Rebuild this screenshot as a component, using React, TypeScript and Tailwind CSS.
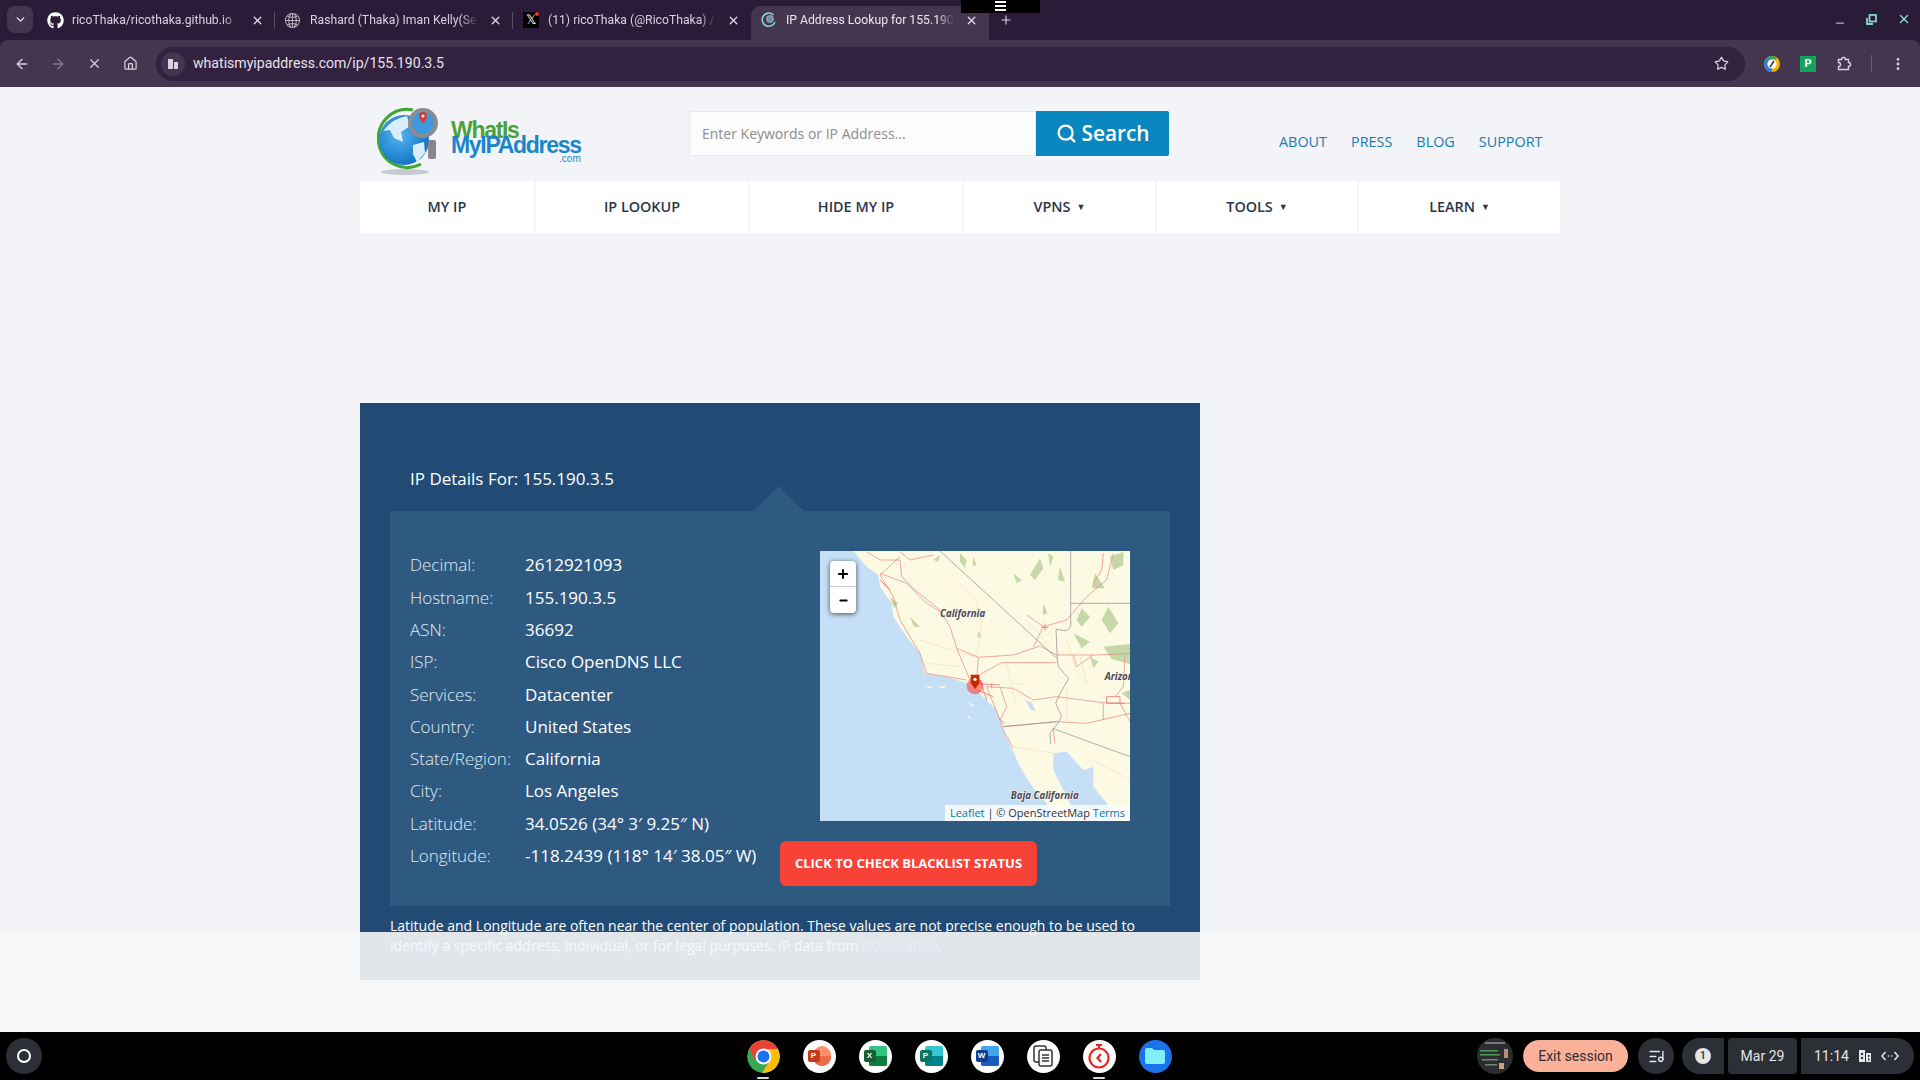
import { ArrowLeft, ArrowRight, X, Home, Star, MoreVertical, ChevronDown, Plus, Minus, Search, ListMusic } from "lucide-react";
import { FaGithub } from "react-icons/fa";
import { BsGlobe2 } from "react-icons/bs";

const navItems = [
  { label: "MY IP", w: "w-[176px]" },
  { label: "IP LOOKUP", w: "w-[214px]" },
  { label: "HIDE MY IP", w: "w-[214px]" },
  { label: "VPNS", w: "w-[193px]", caret: true },
  { label: "TOOLS", w: "w-[202px]", caret: true },
  { label: "LEARN", w: "w-[201px]", caret: true },
];

const rows = [
  ["Decimal:", "2612921093"],
  ["Hostname:", "155.190.3.5"],
  ["ASN:", "36692"],
  ["ISP:", "Cisco OpenDNS LLC"],
  ["Services:", "Datacenter"],
  ["Country:", "United States"],
  ["State/Region:", "California"],
  ["City:", "Los Angeles"],
  ["Latitude:", "34.0526 (34° 3′ 9.25″ N)"],
  ["Longitude:", "-118.2439 (118° 14′ 38.05″ W)"],
];

function Favicon({ kind }: { kind: string }) {
  if (kind === "github") return <FaGithub size={17} className="text-white" />;
  if (kind === "globe") return <BsGlobe2 size={15} className="text-[#bdb5c4]" />;
  if (kind === "x")
    return (
      <span className="relative flex h-4 w-4 items-center justify-center bg-black text-[13px] font-['Liberation_Sans',sans-serif] text-white">
        𝕏<span className="absolute right-0 top-0 h-1 w-1 rounded-full bg-red-500" />
      </span>
    );
  return (
    <svg width="16" height="16" viewBox="0 0 16 16" fill="none">
      <path d="M12.5 3 A6.6 6.6 0 1 0 14 10" stroke="#7fd8c5" strokeWidth="1.6" />
      <circle cx="9" cy="7" r="3.4" fill="#6b8ba6" stroke="#a9b0b8" />
    </svg>
  );
}

function Tab({ icon, title, active }: { icon: string; title: string; active?: boolean }) {
  return (
    <div className={`relative flex h-[34px] w-[238px] shrink-0 items-center pb-[6px] pl-[10px] pr-[11px] ${active ? "rounded-t-[10px] bg-[#44364f] text-[#ece6f0]" : "text-[#d8d0de]"}`}>
      <span className="flex w-[25px] shrink-0 items-center"><Favicon kind={icon} /></span>
      <span className="w-[168px] overflow-hidden whitespace-nowrap text-[12.2px] leading-[16px] [mask-image:linear-gradient(to_right,black_90%,transparent)]">{title}</span>
      <X size={13} strokeWidth={2.4} className="ml-auto text-[#e5dfe9]" />
      {!active && icon !== "x" && <span className="absolute right-0 top-[6px] h-[17px] w-px bg-[#5b4e66]" />}
    </div>
  );
}

function MapPane() {
  return (
    <div className="relative h-[270px] w-[310px] overflow-hidden bg-[#fcfae2]">
      <svg viewBox="60 33 930 810" className="h-full w-full" fill="none">
        <path d="M160 33 L200 80 L235 105 L240 140 L275 190 L280 230 L320 290 L360 340 L375 400 L440 410 L500 430 L540 462 L590 510 L610 570 L635 625 L660 680 L700 745 L740 790 L760 843 L60 843 L60 33Z" fill="#c5dff6" />
        <path d="M760 640 L800 635 L850 690 L880 680 L880 740 L920 790 L945 843 L835 843 L790 750 L760 690Z" fill="#c5dff6" />
        <path d="M675 480 l20 8 l12 26 l-14 -4Z" fill="#c5dff6" />
        <path d="M375 437 l25 3 l-8 6Z M410 440 l28 -3 l-6 8Z M502 486 l20 10 l-8 3Z M500 522 l16 16 l-8 -2Z" fill="#fcfae2" />
        <g fill="#c6d8a8">
          <path d="M480 40 l20 20 l-5 25 l-15 -20Z M520 50 l10 25 l-12 5Z M640 100 l25 20 l-15 10Z M690 105 l30 -50 l10 30 l-25 35Z M780 80 l15 45 l-22 -5Z M745 40 l15 10 l-10 30Z" />
          <path d="M845 205 l25 25 l-25 30 l-15 -20Z M925 200 l30 50 l-25 30 l-25 -40Z M885 100 l30 45 l-40 0Z M930 50 l40 -15 l0 40 l-30 15Z" />
          <path d="M820 280 l50 25 l-25 20Z M910 320 l80 -8 l0 60 l-55 -15Z M870 350 l25 15 l-15 20Z M730 190 l12 30 l-14 5Z M535 270 l8 20 l-10 2Z" />
          <path d="M965 460 l25 -10 l0 30Z M400 60 l20 -15 l-5 20Z M270 170 l25 20 l-12 15Z M330 230 l30 30 l-18 0Z" />
        </g>
        <g stroke="#f8d3b4" strokeWidth="1.6">
          <path d="M360 300 L520 350 M640 430 L675 432 M680 240 L760 330 M800 300 L830 400 L900 470 M800 440 L800 540 M380 370 L480 380 M470 120 L530 180 L545 260 L530 350 M640 620 L760 640 M880 660 L990 720 M840 350 L860 430 M620 370 L650 500" />
        </g>
        <g stroke="#f0817c" strokeWidth="2.1" strokeLinejoin="round">
          <path d="M200 35 L240 60 L300 60 L305 110 L345 150 L420 210 L450 260 L470 325 L510 420 M300 50 L240 105 L280 170 L300 240 L360 340 L380 400 L500 420" />
          <path d="M240 100 L320 130 L380 190 L430 220 M470 325 L535 352 L640 345 L720 318 L770 345 M510 420 L605 368 L770 368 M560 440 L640 445 L700 480 L770 470 L910 488 L990 490" />
          <path d="M600 440 L620 500 L600 540 L610 570 L640 625 M560 440 L600 540 M610 560 L770 545 L860 550 L990 520 M770 345 L890 345 L990 340 M535 352 L530 420" />
          <path d="M680 225 L730 260 L800 240 L860 170 L920 120 L940 40 M730 260 L700 320 M910 488 L910 540 M960 490 L990 545 M760 570 L765 610 M300 35 L330 60 L400 45 M820 345 L830 380 L880 345 M910 40 L905 90 L880 130 M975 345 L970 440 L945 470" />
        </g>
        <g stroke="#f0797b" strokeWidth="2.6">
          <path d="M515 430 L600 435 M530 450 L580 470 M540 420 L560 480 M240 120 L270 150 M920 470 L960 470 L960 490 L920 490 L920 470 M950 490 L975 490 M725 262 L745 262 M735 250 L735 272 M598 535 L612 550 M575 430 L575 445" />
        </g>
        <g stroke="#8c8591" strokeWidth="2">
          <path d="M420 33 L772 356 L775 380 L806 416 L780 460 L767 490 L785 530 L772 552 L750 580 L752 612 M757 565 L990 650 M610 560 L770 545 M812 33 L812 260 L800 272 L768 268 L772 356 M812 190 L990 190" />
        </g>
        <circle cx="525" cy="438" r="25" fill="#f33" opacity=".55" />
        <path d="M512 404 h26 v26 l-13 18 l-13 -18Z" fill="#c72a00" />
        <circle cx="525" cy="418" r="5" fill="#fff" />
        <g fontFamily="Open Sans, sans-serif" fontStyle="italic" fontWeight="700" fontSize="29" fill="#4d4763" stroke="#fcfae2" strokeWidth="3" paintOrder="stroke">
          <text x="420" y="230">California</text>
          <text x="914" y="420">Arizona</text>
          <text x="632" y="776">Baja California</text>
        </g>
      </svg>
      <div className="absolute left-[10px] top-[10px] flex w-[26px] flex-col overflow-hidden rounded-[4px] bg-white shadow-[0_1px_5px_rgba(0,0,0,0.65)]">
        <span className="flex h-[26px] items-center justify-center border-b border-[#ccc] text-black"><Plus size={14} strokeWidth={3.4} /></span>
        <span className="flex h-[26px] items-center justify-center text-black"><Minus size={11} strokeWidth={4} /></span>
      </div>
      <div className="absolute bottom-0 right-0 bg-white/80 px-[5px] text-[11px] leading-[16px] text-[#333]">
        <span className="text-[#0078a8]">Leaflet</span> | © OpenStreetMap <span className="text-[#0078a8]">Terms</span>
      </div>
    </div>
  );
}

function Logo() {
  return (
    <div className="flex items-start pl-[17px]">
      <svg width="64" height="68" viewBox="0 0 64 68" fill="none" className="shrink-0">
        <defs>
          <radialGradient id="globe" cx="0.4" cy="0.4" r="0.7">
            <stop offset="0" stopColor="#54b4ee" />
            <stop offset="1" stopColor="#0d6cc0" />
          </radialGradient>
        </defs>
        <ellipse cx="28" cy="65" rx="24" ry="3" fill="#c6c9cd" />
        <path d="M44 57 A29 29 0 1 1 36 3" stroke="#3fa535" strokeWidth="3" />
        <circle cx="27" cy="33" r="25" fill="url(#globe)" />
        <path d="M6 24 q10 -13 24 -15 l3 10 l-9 6 l2 10 l-9 -4 l-4 -8Z M36 38 l11 -3 l1 11 l-8 9 l-4 -8Z" fill="#d9eefa" />
        <circle cx="46" cy="16" r="13" fill="#3f97dc" stroke="#8a8d90" strokeWidth="4" />
        <rect x="51" y="33" width="8" height="19" rx="2" fill="#85888a" />
        <path d="M46 5 a4 4 0 0 1 4 4 q0 3 -4 7.5 q-4 -4.5 -4 -7.5 A4 4 0 0 1 46 5Z" fill="#d83a2e" />
        <circle cx="46" cy="9" r="1.5" fill="#fff" />
      </svg>
      <div className="ml-[10px] mt-[15px] flex flex-col font-['Liberation_Sans',sans-serif] font-bold tracking-[-1.3px]">
        <span className="text-[23px] leading-[16px] text-[#4aa33a]">WhatIs</span>
        <span className="text-[23px] leading-[15px] text-[#1a86c9]">MyIPAddress</span>
        <span className="mt-[1px] text-right text-[10px] font-normal leading-[10px] tracking-normal text-[#1a86c9]">.com</span>
      </div>
    </div>
  );
}

function DockIcon({ children, bg = "bg-white", dot }: { children: React.ReactNode; bg?: string; dot?: boolean }) {
  return (
    <div className="relative flex w-[56px] justify-center">
      <span className={`flex h-[33px] w-[33px] items-center justify-center overflow-hidden rounded-full ${bg}`}>{children}</span>
      {dot && <span className="absolute -bottom-[6px] h-[2px] w-[12px] rounded bg-[#d8dadd]" />}
    </div>
  );
}

function OfficeIcon({ letter, back, mid, front, round }: { letter: string; back: string; mid: string; front: string; round?: boolean }) {
  return (
    <span className="relative block h-[20px] w-[23px]">
      <span className={`absolute right-0 top-0 h-[20px] w-[18px] overflow-hidden ${round ? "rounded-full" : "rounded-[2px]"} ${back}`}>
        <span className={`absolute bottom-0 left-0 h-[10px] w-full ${mid}`} />
      </span>
      <span className={`absolute left-0 top-[4px] flex h-[12px] w-[12px] items-center justify-center rounded-[2px] text-[8px] font-bold text-white font-['Liberation_Sans',sans-serif] ${front}`}>{letter}</span>
    </span>
  );
}

export default function App() {
  return (
    <div className="relative flex h-screen w-full flex-col overflow-hidden bg-[#f2f4f7] font-['Open_Sans',sans-serif]">
      {/* browser chrome */}
      <div className="h-[87px] shrink-0 bg-[#2a1c39] font-['Roboto',sans-serif]">
        <div className="flex h-[40px] items-end pl-[7px]">
          <span className="mb-[7px] flex h-[27px] w-[26px] items-center justify-center rounded-lg bg-[#44364f] text-[#e5dfe9]"><ChevronDown size={13} strokeWidth={2.6} /></span>
          <div className="ml-[4px] flex">
            <Tab icon="github" title="ricoThaka/ricothaka.github.io" />
            <Tab icon="globe" title="Rashard (Thaka) Iman Kelly(Se" />
            <Tab icon="x" title="(11) ricoThaka (@RicoThaka) /" />
            <Tab icon="wimip" title="IP Address Lookup for 155.190" active />
          </div>
          <Plus size={14} strokeWidth={2} className="mb-[13px] ml-[10px] text-[#d8cfe0]" />
          <div className="mb-[14px] ml-auto flex items-center gap-[20px] pr-[9px] text-[#7fd8c5]">
            <Minus size={12} strokeWidth={2.5} className="translate-y-[4px]" />
            <svg width="11" height="11" viewBox="0 0 11 11" fill="none" stroke="#7fd8c5" strokeWidth="1.8">
              <rect x="3.5" y="1" width="6.5" height="6.5" />
              <path d="M1 4v6h6" />
            </svg>
            <X size={14} strokeWidth={2.5} />
          </div>
        </div>
        <div className="flex h-[47px] items-center rounded-t-[8px] bg-[#44364f] pl-[14px] pr-[12px] text-[#d8cfe0]">
          <ArrowLeft size={16} strokeWidth={2} />
          <ArrowRight size={16} strokeWidth={2} className="ml-[20px] text-[#85798f]" />
          <X size={15} strokeWidth={2} className="ml-[21px]" />
          <Home size={15} strokeWidth={2} className="ml-[21px]" />
          <div className="ml-[18px] flex h-[34px] w-[1589px] shrink-0 items-center rounded-full bg-[#32213f] pl-[5px] pr-[16px]">
            <span className="flex h-[24px] w-[24px] items-center justify-center rounded-full bg-[#44364f]">
              <svg width="12" height="12" viewBox="0 0 12 12" fill="#d8cfe0"><path d="M1 1h5v10H1Z" /><path d="M7 4h4v7H7Z" /></svg>
            </span>
            <span className="ml-[8px] text-[14.1px] text-[#e8e2ec]">whatismyipaddress.com/ip/155.190.3.5</span>
            <Star size={15} strokeWidth={2} className="ml-auto" />
          </div>
          <svg width="16" height="16" viewBox="0 0 16 16" className="ml-[19px] shrink-0">
            <circle cx="8" cy="8" r="8" fill="#f5b400" />
            <path d="M8 0 a8 8 0 0 0 -8 8 a8 8 0 0 0 8 8Z" fill="#2f7de1" />
            <path d="M3 2 a8 8 0 0 1 10 0 L8 5Z" fill="#34a853" />
            <circle cx="8" cy="8" r="4.6" fill="#fff" />
            <path d="M10 5 L6 11" stroke="#44364f" strokeWidth="1.6" />
          </svg>
          <span className="ml-[20px] flex h-[16px] w-[16px] shrink-0 items-center justify-center bg-[#12a45c] text-[11px] font-bold leading-none text-white">P</span>
          <svg width="16" height="16" viewBox="0 0 16 16" fill="none" stroke="#d8cfe0" strokeWidth="1.4" className="ml-[20px] shrink-0">
            <path d="M2.5 3.5h3a2 2 0 0 1 4 0h3v3a2 2 0 0 1 0 4v3h-10v-3a2 2 0 0 0 0-4Z" />
          </svg>
          <span className="ml-[19px] h-[17px] w-px shrink-0 bg-[#6a5d75]" />
          <MoreVertical size={16} strokeWidth={2.2} className="ml-[18px] shrink-0" />
        </div>
      </div>

      {/* page */}
      <div className="ml-[360px] w-[1200px]">
        <div className="flex h-[94px]">
          <div className="mt-[20px] w-[220px]"><Logo /></div>
          <div className="ml-[109px] mt-[24px] flex h-[45px]">
            <div className="flex w-[347px] items-center border border-[#e6e8ec] bg-[#fcfcfc] pl-[12px] text-[14px] text-[#8d8d8d]">Enter Keywords or IP Address...</div>
            <button className="flex w-[133px] items-center justify-center gap-[5px] rounded-r-[2px] bg-[#0a87bf] text-[20.8px] font-semibold text-white">
              <Search size={21} strokeWidth={2.6} />
              Search
            </button>
          </div>
          <div className="ml-[110px] mt-[45px] flex h-[20px] gap-[24px] text-[14.4px] leading-[20px] text-[#1b79b5]">
            <span>ABOUT</span>
            <span>PRESS</span>
            <span>BLOG</span>
            <span>SUPPORT</span>
          </div>
        </div>
        <div className="flex h-[52px] bg-white">
          {navItems.map((n) => (
            <div key={n.label} className={`flex items-center justify-center gap-[6px] border-r-2 border-[#f2f4f7] pb-[1px] text-[14.4px] font-semibold text-[#2b3648] last:border-r-0 ${n.w}`}>
              {n.label}
              {n.caret && <span className="text-[9px]">▼</span>}
            </div>
          ))}
        </div>

        <div className="mt-[170px] h-[577px] w-[840px] bg-[#214a75] text-white">
          <div className="relative h-[108px] pl-[50px] pt-[62px] text-[17px] leading-[28px]">
            IP Details For: 155.190.3.5
            <span className="absolute bottom-0 left-[394px] h-0 w-0 border-x-[25px] border-b-[25px] border-x-transparent border-b-[#2e5a82]" />
          </div>
          <div className="mx-[30px] flex h-[395px] bg-[#2e5a82]">
            <div className="w-[430px] pl-[20px] pt-[38px]">
              {rows.map(([label, value]) => (
                <div key={label} className="flex h-[32.3px] items-center whitespace-nowrap text-[17px]">
                  <span className="w-[115px] shrink-0 font-light text-[#e4ebf1]">{label}</span>
                  <span>{value}</span>
                </div>
              ))}
            </div>
            <div className="pt-[40px]">
              <MapPane />
              <button className="-ml-[40px] mt-[20px] flex h-[45px] w-[257px] items-center justify-center rounded-[6px] bg-[#f64237] text-[13px] font-bold text-white">CLICK TO CHECK BLACKLIST STATUS</button>
            </div>
          </div>
          <p className="mx-[30px] mt-[10px] text-[14px] leading-[20px]">
            Latitude and Longitude are often near the center of population. These values are not precise enough to be used to identify a specific address, individual, or for legal purposes. IP data from <span className="text-[#5aa6d6]">IP2Location</span>.
          </p>
        </div>
      </div>

      {/* fade over the bottom of the page */}
      <div className="absolute inset-x-0 bottom-[48px] top-[932px] bg-[#f6f7f8]/90" />

      {/* fullscreen handle */}
      <div className="absolute left-[961px] top-0 flex h-[13px] w-[79px] flex-col items-center gap-[2px] bg-black pt-[1px]">
        <span className="h-[2px] w-[11px] bg-white" />
        <span className="h-[2px] w-[11px] bg-white" />
        <span className="h-[2px] w-[11px] bg-white" />
      </div>

      {/* shelf */}
      <div className="absolute inset-x-0 bottom-0 flex h-[48px] items-center bg-black font-['Roboto',sans-serif]">
        <span className="ml-[6px] flex h-[36px] w-[36px] items-center justify-center rounded-full bg-[#2c2f36]">
          <span className="h-[14px] w-[14px] rounded-full border-2 border-white" />
        </span>
        <div className="ml-[693px] flex items-center">
          <DockIcon bg="bg-transparent" dot>
            <svg width="33" height="33" viewBox="0 0 33 33">
              <circle cx="16.5" cy="16.5" r="16.5" fill="#34a853" />
              <path d="M16.5 0 A16.5 16.5 0 0 1 31 9 L16.5 9 L7 20 L2.5 8 A16.5 16.5 0 0 1 16.5 0Z" fill="#ea4335" />
              <path d="M31 9 A16.5 16.5 0 0 1 15 33 L23 20 L16.5 9Z" fill="#fbbc04" />
              <circle cx="16.5" cy="16.5" r="8" fill="#fff" />
              <circle cx="16.5" cy="16.5" r="6" fill="#1a73e8" />
            </svg>
          </DockIcon>
          <DockIcon><OfficeIcon letter="P" back="bg-[#ff8f6b]" mid="bg-[#ed6c47]" front="bg-[#c43e1c]" round /></DockIcon>
          <DockIcon><OfficeIcon letter="X" back="bg-[#33c481]" mid="bg-[#107c41]" front="bg-[#185c37]" /></DockIcon>
          <DockIcon><OfficeIcon letter="P" back="bg-[#37c6d0]" mid="bg-[#038387]" front="bg-[#077568]" /></DockIcon>
          <DockIcon><OfficeIcon letter="W" back="bg-[#41a5ee]" mid="bg-[#185abd]" front="bg-[#103f91]" /></DockIcon>
          <DockIcon>
            <svg width="24" height="24" viewBox="0 0 24 24" fill="none" stroke="#333" strokeWidth="1.5">
              <rect x="3" y="2" width="12" height="16" rx="2" />
              <rect x="8" y="6" width="13" height="16" rx="2" fill="#fff" />
              <path d="M11 11h7M11 14h7M11 17h7" />
            </svg>
          </DockIcon>
          <DockIcon dot>
            <svg width="26" height="26" viewBox="0 0 26 26" fill="none" stroke="#e8281e" strokeWidth="2.2">
              <circle cx="13" cy="15" r="9.5" />
              <path d="M10 2h6M13 2v3M15 11l-3.5 4 3.5 4" />
            </svg>
          </DockIcon>
          <DockIcon bg="bg-[#1a73e8]">
            <svg width="22" height="18" viewBox="0 0 22 18"><path d="M1 3 a2 2 0 0 1 2 -2 h5 l2 2 h9 a2 2 0 0 1 2 2 v10 a2 2 0 0 1 -2 2 H3 a2 2 0 0 1 -2 -2Z" fill="#80f0f8" /></svg>
          </DockIcon>
        </div>
        <div className="ml-auto mr-[6px] flex items-center text-[#e3e5e8]">
          <svg width="36" height="36" viewBox="0 0 36 36" className="rounded-full">
            <rect width="36" height="36" fill="#2b2d30" />
            <rect x="8" y="4" width="20" height="2" fill="#777" />
            <rect x="3" y="12" width="18" height="1.5" fill="#4d9b55" />
            <rect x="3" y="16" width="20" height="1.5" fill="#4d9b55" />
            <rect x="5" y="21" width="16" height="1.5" fill="#6f876f" />
            <rect x="8" y="26" width="12" height="1.5" fill="#6f876f" />
            <rect x="27" y="11" width="4" height="9" fill="#b88f7a" />
            <rect x="22" y="25" width="5" height="6" fill="#c9a08c" />
          </svg>
          <span className="ml-[10px] flex h-[32px] w-[105px] items-center justify-center rounded-full bg-[#fbb09a] text-[14px] text-[#2c2f36]">Exit session</span>
          <span className="ml-[10px] flex h-[36px] w-[36px] items-center justify-center rounded-full bg-[#2c2f36]"><ListMusic size={17} /></span>
          <span className="ml-[8px] flex h-[36px] w-[42px] items-center justify-center rounded-l-full rounded-r-[4px] bg-[#2c2f36]">
            <span className="flex h-[16px] w-[16px] items-center justify-center rounded-full bg-[#e3e5e8] text-[11px] font-medium text-[#2c2f36]">1</span>
          </span>
          <span className="ml-[4px] flex h-[36px] w-[69px] items-center justify-center rounded-[4px] bg-[#2c2f36] text-[14px]">Mar 29</span>
          <span className="ml-[4px] flex h-[36px] w-[113px] items-center gap-[10px] rounded-l-[4px] rounded-r-full bg-[#2c2f36] pl-[13px] text-[14px]">
            11:14
            <svg width="12" height="12" viewBox="0 0 12 12" fill="#e3e5e8">
              <path d="M0 0h6v12H0Z M7 3h5v9H7Z" />
              <path d="M2 3h2v2H2Z M2 7h2v2H2Z M9 5h1.5v2H9Z M9 8.5h1.5v2H9Z" fill="#2c2f36" />
            </svg>
            <svg width="18" height="10" viewBox="0 0 18 10" fill="none" stroke="#e3e5e8" strokeWidth="1.5">
              <path d="M4.5 1 L1 5 L4.5 9 M13.5 1 L17 5 L13.5 9" />
              <path d="M6.8 5h1.2M10 5h1.2" />
            </svg>
          </span>
        </div>
      </div>
    </div>
  );
}
